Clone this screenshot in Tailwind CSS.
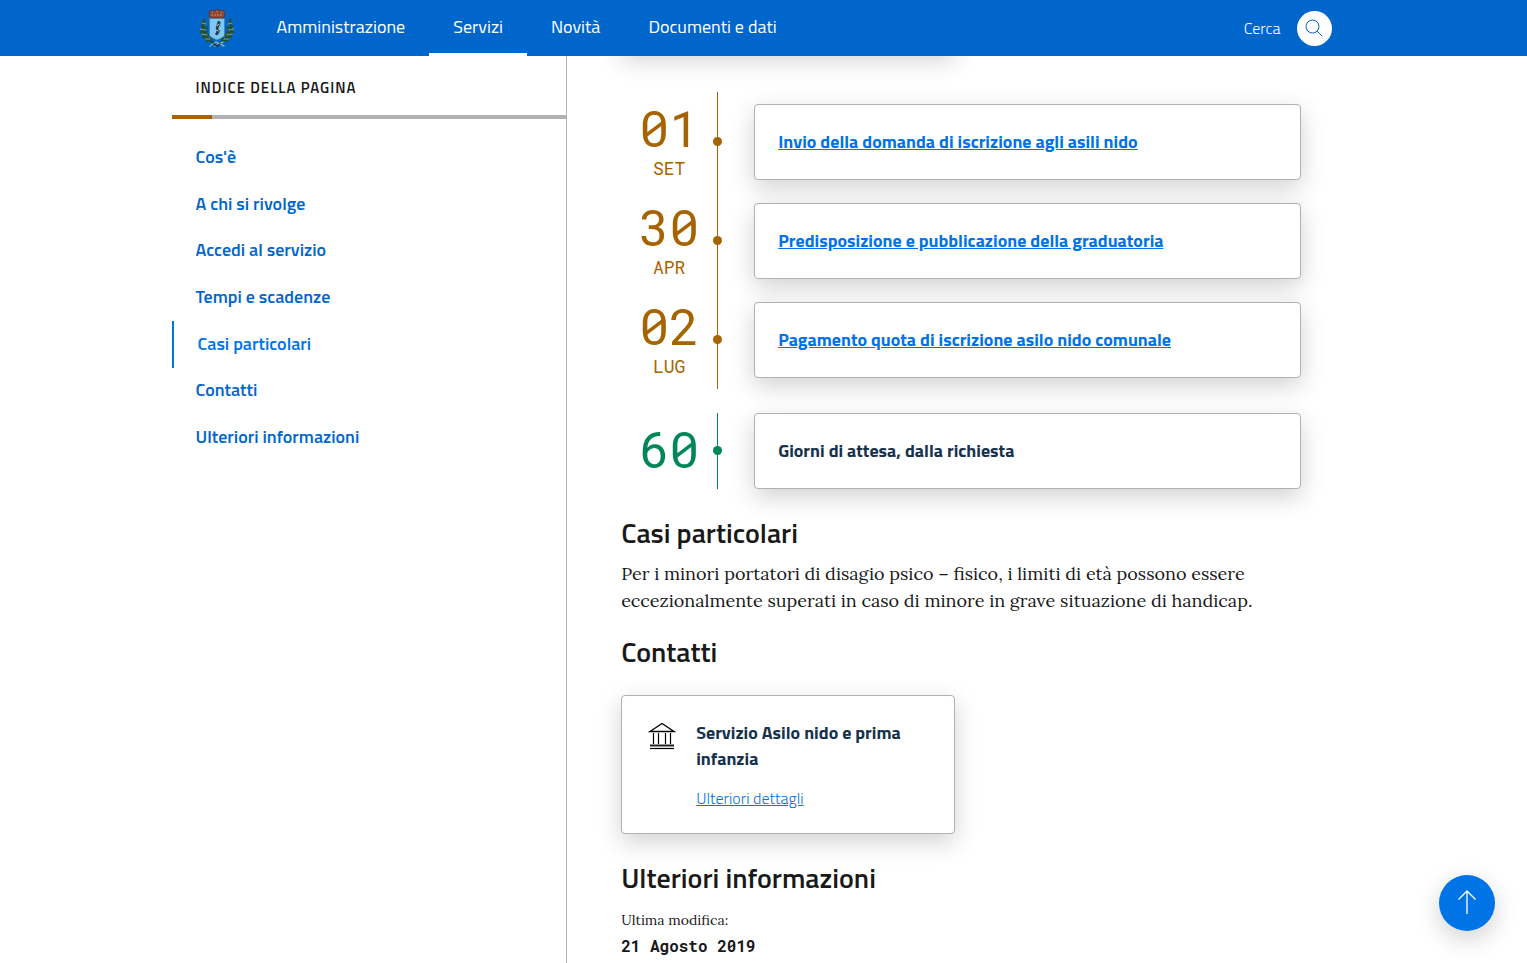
<!DOCTYPE html>
<html lang="it">
<head>
<meta charset="utf-8">
<meta name="viewport" content="width=device-width, initial-scale=1">
<title>Servizi - Asilo nido</title>
<script src="https://cdn.jsdelivr.net/npm/@tailwindcss/browser@4"></script>
</head>
<body class="bg-white text-[#19191a] font-['Titillium_Web','Roboto',sans-serif] text-[18px]">
<header class="fixed inset-x-0 top-0 z-10 h-14 bg-[#0066cc] text-white">
  <div class="mx-auto flex h-full max-w-[1184px] items-stretch pr-6 pl-[27px]">
    <a href="#" aria-label="Home" class="flex w-9 items-center">
      <svg viewBox="0 0 36 40" class="h-10 w-9" aria-hidden="true">
        <g fill="none" stroke-linecap="round">
          <path d="M5 14C2 22 5 30 15 35M31 14C34 22 31 30 21 35" stroke="#1d4a2c" stroke-width="2"/>
          <path d="M5 12l-1 4M3 18l5 2M2 24l6 0M4 29l6-2M8 33l5-3M31 12l1 4M33 18l-5 2M34 24l-6 0M32 29l-6-2M28 33l-5-3" stroke="#2a5226" stroke-width="2.400"/>
          <path d="M3 15l4 1M1 21l5 1M3 26l5 1M7 31l4 0M33 15l-4 1M35 21l-5 1M33 26l-5 1M29 31l-4 0" stroke="#8f9f68" stroke-width="1"/>
          <path d="M11 38l6-4 8 4M24 34l-8 4" stroke="#7fb2c4" stroke-width="1.500"/>
          <path d="M15 36l3 2 3-2" stroke="#1b2b3a" stroke-width="1.500"/>
        </g>
        <path d="M10.500 10h15v17q0 2-7.500 5q-7.500-3-7.500-5z" fill="#79c8f6" stroke="#4b7f9f" stroke-width=".8"/>
        <path d="M19 13q4 0 2 4l-2 4q3 1 1 4-2 4-4 1 2-2 1-4-1-3 1-6 0-2 1-3z" fill="#2b3b4c"/>
        <path d="M17.500 18l3-2M16.500 22l3 1" stroke="#c8d4d8" stroke-width="1"/>
        <path d="M10 4l2-2 3 1 3-2 3 2 3-1 2 2-1 6H11z" fill="#8c4836" stroke="#55302c" stroke-width=".8"/>
        <path d="M12 7h12M13 4h1M18 3v1M22 4h1" stroke="#d58a60" stroke-dasharray="2 1"/>
      </svg>
    </a>
    <nav class="ml-[18px] flex" aria-label="Principale">
      <a href="#" class="px-6 pt-[13px] leading-7">Amministrazione</a>
      <a href="#" aria-current="page" class="border-b-[3px] border-white px-6 pt-[13px] leading-7">Servizi</a>
      <a href="#" class="px-6 pt-[13px] leading-7">Novità</a>
      <a href="#" class="px-6 pt-[13px] leading-7">Documenti e dati</a>
    </nav>
    <div class="ml-auto flex items-center gap-4">
      <span class="text-[16px] font-light">Cerca</span>
      <button type="button" aria-label="Cerca nel sito" class="grid size-[35px] place-items-center rounded-full bg-white">
        <svg viewBox="0 0 20 20" class="size-5" fill="none" stroke="#0066cc" aria-hidden="true"><circle cx="8.500" cy="8.500" r="6.500"/><path d="M13.200 13.200l5 5"/></svg>
      </button>
    </div>
  </div>
</header>

<div class="mx-auto flex min-h-screen max-w-[1184px]">
  <aside class="w-1/3 shrink-0 pt-14">
    <h2 class="px-6 pt-5 pb-[15px] text-[15px] leading-6 font-semibold tracking-[1px] uppercase">Indice della pagina</h2>
    <div class="h-1 bg-[#b1b1b3]"><div class="h-full w-10 bg-[#a66300]"></div></div>
    <nav class="mt-[15px] grid h-[327px] auto-rows-fr font-semibold text-[#0066cc]" aria-label="Indice della pagina">
      <a href="#cose" class="flex items-center px-6 pb-[2px]">Cos'è</a>
      <a href="#chi" class="flex items-center px-6 pb-[2px]">A chi si rivolge</a>
      <a href="#accedi" class="flex items-center px-6 pb-[2px]">Accedi al servizio</a>
      <a href="#tempi" class="flex items-center px-6 pb-[2px]">Tempi e scadenze</a>
      <a href="#casi" class="flex items-center border-l-2 border-[#0073e6] px-6 pb-[2px] text-[#0073e6]">Casi particolari</a>
      <a href="#contatti" class="flex items-center px-6 pb-[2px]">Contatti</a>
      <a href="#ulteriori" class="flex items-center px-6 pb-[2px]">Ulteriori informazioni</a>
    </nav>
  </aside>

  <main class="grow border-l border-[#b1b1b3] pr-[55px] pl-[54px]">
    <div class="h-[52px] w-[334px] rounded border border-[#b1b1b3] shadow-[0_8px_24px_rgba(0,0,0,0.18)]"></div>
    <section id="tempi" class="pt-10">
      <div class="flex">
        <div class="flex w-24 flex-col items-center gap-[2px] pt-[10px] font-['Roboto_Mono',monospace] text-[#a66300]"><span class="text-[50px] leading-[52px]">01</span><span class="leading-6">SET</span></div>
        <div class="relative w-px bg-[#a66300]"><span class="absolute top-[45px] -left-1 size-[9px] rounded-full bg-[#a66300]"></span></div>
        <div class="grow pt-3 pb-[11px] pl-9"><div class="rounded border border-[#b1b1b3] bg-white px-[23px] py-6 leading-[26px] font-bold text-[#0073e6] shadow-[0_8px_24px_rgba(0,0,0,0.18)]"><a href="#" class="underline">Invio della domanda di iscrizione agli asili nido</a></div></div>
      </div>
      <div class="flex">
        <div class="flex w-24 flex-col items-center gap-[2px] pt-[10px] font-['Roboto_Mono',monospace] text-[#a66300]"><span class="text-[50px] leading-[52px]">30</span><span class="leading-6">APR</span></div>
        <div class="relative w-px bg-[#a66300]"><span class="absolute top-[45px] -left-1 size-[9px] rounded-full bg-[#a66300]"></span></div>
        <div class="grow pt-3 pb-[11px] pl-9"><div class="rounded border border-[#b1b1b3] bg-white px-[23px] py-6 leading-[26px] font-bold text-[#0073e6] shadow-[0_8px_24px_rgba(0,0,0,0.18)]"><a href="#" class="underline">Predisposizione e pubblicazione della graduatoria</a></div></div>
      </div>
      <div class="flex">
        <div class="flex w-24 flex-col items-center gap-[2px] pt-[10px] font-['Roboto_Mono',monospace] text-[#a66300]"><span class="text-[50px] leading-[52px]">02</span><span class="leading-6">LUG</span></div>
        <div class="relative w-px bg-[#a66300]"><span class="absolute top-[45px] -left-1 size-[9px] rounded-full bg-[#a66300]"></span></div>
        <div class="grow pt-3 pb-[11px] pl-9"><div class="rounded border border-[#b1b1b3] bg-white px-[23px] py-6 leading-[26px] font-bold text-[#0073e6] shadow-[0_8px_24px_rgba(0,0,0,0.18)]"><a href="#" class="underline">Pagamento quota di iscrizione asilo nido comunale</a></div></div>
      </div>
      <div class="mt-6 flex">
        <div class="flex w-24 justify-center pt-[10px] font-['Roboto_Mono',monospace] text-[#008758]"><span class="text-[50px] leading-[52px]">60</span></div>
        <div class="relative w-px bg-[#008758]"><span class="absolute top-[33px] -left-1 size-[9px] rounded-full bg-[#008758]"></span></div>
        <div class="grow pl-9"><div class="rounded border border-[#b1b1b3] bg-white px-[23px] py-6 leading-[26px] font-bold text-[#17324d] shadow-[0_8px_24px_rgba(0,0,0,0.18)]">Giorni di attesa, dalla richiesta</div></div>
      </div>
    </section>

    <section id="casi" class="pt-6">
      <h2 class="text-[28px] leading-10 font-semibold">Casi particolari</h2>
      <p class="mt-[7px] font-['Lora','Liberation_Serif',serif] leading-[27px]">Per i minori portatori di disagio psico – fisico, i limiti di età possono essere eccezionalmente superati in caso di minore in grave situazione di handicap.</p>
    </section>

    <section id="contatti" class="pt-[18px]">
      <h2 class="text-[28px] leading-10 font-semibold">Contatti</h2>
      <div class="mt-[23px] flex w-[334px] gap-5 rounded border border-[#b1b1b3] bg-white px-[26px] pt-6 pb-[22px] shadow-[0_8px_24px_rgba(0,0,0,0.18)]">
        <svg viewBox="0 0 28 28" class="mt-[2px] size-7 shrink-0" fill="none" stroke="#000" aria-hidden="true"><path d="M2 9.500L14 1.500l12 8z" stroke-width="1.300"/><path d="M5.500 11v11M10.500 11v11M17.500 11v11M22.500 11v11" stroke-width="1.200"/><path d="M2 23.500h24" stroke-width="2" stroke="#222"/><path d="M2 26.500h24" stroke-width="1.200"/></svg>
        <div>
          <h3 class="leading-[26px] font-bold text-[#17324d]">Servizio Asilo nido e prima infanzia</h3>
          <a href="#" class="mt-[13px] block text-[16px] leading-[26px] font-light text-[#0073e6] underline">Ulteriori dettagli</a>
        </div>
      </div>
    </section>

    <section id="ulteriori" class="pt-6">
      <h2 class="text-[28px] leading-10 font-semibold">Ulteriori informazioni</h2>
      <p class="mt-[10px] font-['Lora','Liberation_Serif',serif] text-[14px] leading-6">Ultima modifica:</p>
      <p class="mt-[2px] font-['Roboto_Mono','Liberation_Mono',monospace] text-[16px] leading-6 font-bold">21 Agosto 2019</p>
    </section>
  </main>
</div>

<a href="#" aria-label="Torna su" class="fixed right-8 bottom-8 grid size-14 place-items-center rounded-full bg-[#0073e6] shadow-[0_8px_24px_rgba(0,0,0,0.18)]">
  <svg viewBox="0 0 24 28" class="h-7 w-6" fill="none" stroke="#fff" stroke-width="1.300" aria-hidden="true"><path d="M12 2v23M3.500 10.500L12 2l8.500 8.500"/></svg>
</a>
</body>
</html>
